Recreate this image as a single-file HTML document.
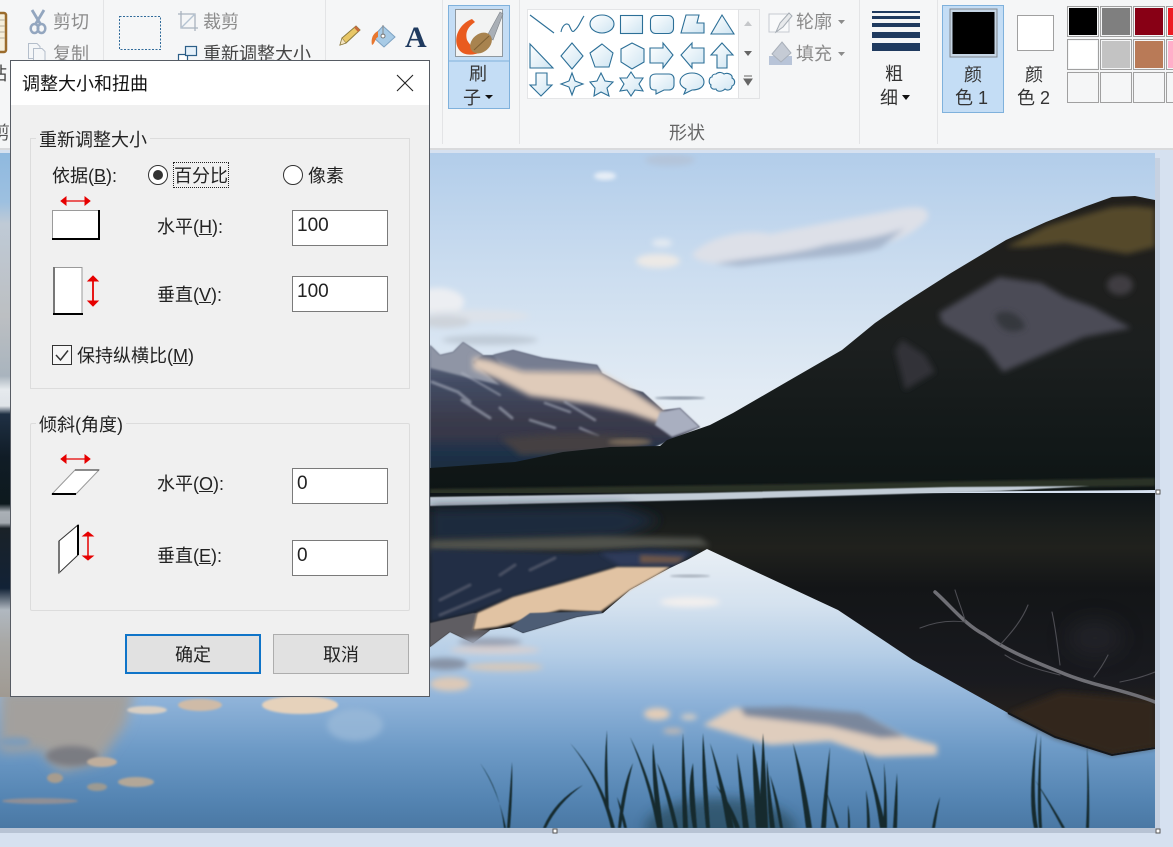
<!DOCTYPE html>
<html><head><meta charset="utf-8"><style>
html,body{margin:0;padding:0;width:1173px;height:847px;overflow:hidden;background:#d6e1f0}
body{position:relative;font-family:"Liberation Sans","Noto Sans CJK SC",sans-serif;font-size:18px;color:#222}
.t{position:absolute;line-height:24px;height:24px;white-space:nowrap;margin-top:1px}
.g{color:#8b8b8b}.c{text-align:center}
.b{position:absolute;box-sizing:border-box}
svg{position:absolute;left:0;top:0}
.in{position:absolute;box-sizing:border-box;left:292px;width:96px;height:36px;background:#fff;border:1px solid #7a7a7a;font-size:19px;line-height:29px;padding-left:4px;color:#222}
.sw{position:absolute;box-sizing:border-box;width:32px;height:31px;border:1px solid #a0a0a0}
.sw i{position:absolute;left:1px;top:1px;right:1px;bottom:1px;display:block}
</style></head><body>

<svg width="1173" height="847" viewBox="0 0 1173 847">
<defs>
<linearGradient id="sky" x1="0" y1="0" x2="0" y2="1"><stop offset="0" stop-color="#b2cdea"/><stop offset=".35" stop-color="#cadcef"/><stop offset=".75" stop-color="#e2ebf4"/><stop offset="1" stop-color="#eaf0f5"/></linearGradient>
<linearGradient id="refl" gradientUnits="userSpaceOnUse" x1="0" y1="549" x2="0" y2="828"><stop offset="0" stop-color="#e9eff5"/><stop offset=".2" stop-color="#d5e2ef"/><stop offset=".38" stop-color="#b4cde6"/><stop offset=".54" stop-color="#8fb3d9"/><stop offset=".72" stop-color="#6d9ac6"/><stop offset=".9" stop-color="#5484b2"/><stop offset="1" stop-color="#4a78a4"/></linearGradient>
<linearGradient id="mt" gradientUnits="userSpaceOnUse" x1="0" y1="200" x2="0" y2="490"><stop offset="0" stop-color="#211f1c"/><stop offset=".5" stop-color="#1c1f1f"/><stop offset=".8" stop-color="#131919"/><stop offset="1" stop-color="#0e1515"/></linearGradient>
<linearGradient id="far" gradientUnits="userSpaceOnUse" x1="0" y1="345" x2="0" y2="470"><stop offset="0" stop-color="#6a7288"/><stop offset=".3" stop-color="#434c64"/><stop offset=".6" stop-color="#3a3b4c"/><stop offset=".72" stop-color="#37384a"/><stop offset=".85" stop-color="#1f3148"/><stop offset="1" stop-color="#1b2c40"/></linearGradient>
<linearGradient id="rw" gradientUnits="userSpaceOnUse" x1="0" y1="495" x2="0" y2="760"><stop offset="0" stop-color="#0f1518"/><stop offset=".12" stop-color="#1b1e1c"/><stop offset=".2" stop-color="#20211d"/><stop offset=".35" stop-color="#131517"/><stop offset=".7" stop-color="#191a1f"/><stop offset="1" stop-color="#32271a"/></linearGradient>
<linearGradient id="strip" x1="0" y1="0" x2="0" y2="1">
<stop offset="0" stop-color="#8fb9df"/><stop offset=".09" stop-color="#9dc0e0"/><stop offset=".13" stop-color="#bfcad6"/><stop offset=".3" stop-color="#bcbfc2"/><stop offset=".41" stop-color="#a9b4be"/><stop offset=".435" stop-color="#e6eaee"/><stop offset=".465" stop-color="#dfe3e8"/><stop offset=".48" stop-color="#1f3044"/><stop offset=".56" stop-color="#101c26"/><stop offset=".645" stop-color="#0e1a1e"/><stop offset=".66" stop-color="#aab0b6"/><stop offset=".68" stop-color="#a3a9af"/><stop offset=".69" stop-color="#1a2228"/><stop offset=".8" stop-color="#122236"/><stop offset=".84" stop-color="#b0b8c0"/><stop offset=".9" stop-color="#a8a8a6"/><stop offset="1" stop-color="#a09a92"/></linearGradient>
<linearGradient id="sf" x1="0" y1="0" x2="1" y2="1"><stop offset="0" stop-color="#fff"/><stop offset="1" stop-color="#cfe5f2"/></linearGradient>
<filter id="b1" x="-30%" y="-30%" width="160%" height="160%"><feGaussianBlur stdDeviation="1"/></filter>
<filter id="b2" x="-30%" y="-30%" width="160%" height="160%"><feGaussianBlur stdDeviation="2"/></filter>
<filter id="b3" x="-30%" y="-50%" width="160%" height="200%"><feGaussianBlur stdDeviation="3"/></filter>
<filter id="b6" x="-40%" y="-60%" width="180%" height="220%"><feGaussianBlur stdDeviation="6"/></filter>
<filter id="b10" x="-40%" y="-60%" width="180%" height="220%"><feGaussianBlur stdDeviation="10"/></filter>
<filter id="bg" x="-5%" y="-5%" width="110%" height="110%"><feGaussianBlur stdDeviation=".5"/></filter>
<clipPath id="ph"><rect x="0" y="153" width="1155" height="675"/></clipPath>
</defs>

<!-- canvas shadow -->
<rect x="0" y="828" width="1160" height="5" fill="#b7c3d4"/>
<rect x="1155" y="158" width="5" height="675" fill="#c6d1e1"/>

<g clip-path="url(#ph)">
<rect x="0" y="153" width="1155" height="320" fill="url(#sky)"/>
<!-- sky clouds -->
<ellipse cx="670" cy="160" rx="25" ry="6" fill="#b4c5da" filter="url(#b3)"/>
<ellipse cx="605" cy="176" rx="11" ry="4" fill="#e8eff7" filter="url(#b2)"/>
<g filter="url(#b3)">
<path d="M692 255 C705 238 745 228 770 234 C800 228 850 218 885 212 C915 205 930 205 928 218 C915 235 890 245 850 250 C810 258 770 262 740 262 C720 264 700 265 692 255Z" fill="#dde0e8"/>
<path d="M715 264 C740 258 790 256 825 245 C860 240 885 236 905 228 L880 248 C850 256 830 256 790 260 L740 266Z" fill="#a8b7cd"/>
<ellipse cx="658" cy="261" rx="22" ry="7" fill="#ece9e6"/>
<ellipse cx="662" cy="243" rx="10" ry="4" fill="#e4eaf1"/>
</g>
<g filter="url(#b3)">
<ellipse cx="438" cy="302" rx="26" ry="14" fill="#eceef2"/>
<ellipse cx="470" cy="316" rx="60" ry="6" fill="#dde2e9"/>
<ellipse cx="490" cy="340" rx="48" ry="5" fill="#c0cbd7"/>
<ellipse cx="445" cy="322" rx="25" ry="6" fill="#cdd3da"/>
</g>
<ellipse cx="680" cy="398" rx="25" ry="1.500" fill="#8b96a5" filter="url(#b1)"/>
<!-- far mountain -->
<path d="M430 345 L440 355 L453 352 L463 342 L483 355 L493 355 L513 350 L543 358 L597 365 L602 373 L630 388 L643 392 L663 410 L680 408 L700 427 L657 446 L600 470 L430 475Z" fill="url(#far)" filter="url(#bg)"/>
<path d="M430 345 L440 355 L453 352 L463 342 L483 355 L473 362 L500 385 L470 378 L430 368Z" fill="#8f95a5" filter="url(#b1)"/>
<path d="M493 355 L513 350 L543 358 L597 365 L602 373 L523 373 L500 364Z" fill="#767d91" filter="url(#b1)"/>
<path d="M473 357 L490 360 L523 371 L600 372 L630 389 L663 411 L668 426 L630 413 L590 404 L530 396 L497 379 L473 369Z" fill="#dfcbba" filter="url(#b3)"/>
<path d="M660 412 L680 408 L700 427 L672 437 L655 425Z" fill="#a9afc0" filter="url(#b1)"/>
<g stroke="#aeb4c2" fill="none" filter="url(#b1)" stroke-linecap="round" opacity=".6">
<path d="M432 382 L458 392 L470 402 M462 400 L490 418 M500 408 L512 418" stroke-width="3"/>
<path d="M530 420 L555 428 M580 428 L598 436 M545 403 L570 412 M565 402 L595 420" stroke-width="2.500"/>
<path d="M462 373 L500 395" stroke-width="2"/>
</g>
<path d="M500 438 Q580 430 650 438 L630 452 L520 455Z" fill="#443f42" filter="url(#b3)"/>
<ellipse cx="630" cy="442" rx="22" ry="3" fill="#7a6c5c" filter="url(#b2)"/>
<!-- big mountain -->
<path d="M660 446 L667 440 L710 425 L733 413 L790 380 L842 350 L875 323 L904 303 L951 273 L1006 240 L1046 222 L1084 207 L1112 197 L1135 196 L1155 200 L1155 490 L430 496 L430 468 L515 462 L563 452 L610 447Z" fill="url(#mt)"/>
<clipPath id="mc"><path d="M1006 240 L1046 222 L1084 207 L1112 197 L1135 196 L1155 200 L1155 262 L1000 262Z"/></clipPath>
<g clip-path="url(#mc)"><path d="M1006 247 L1046 226 L1084 215 L1112 207 L1135 206 L1155 208 L1155 247 L1127 254 L1065 243 L1027 247Z" fill="#54482a" filter="url(#b3)"/></g>
<path d="M939 313 L999 277 L1041 283 L1065 297 L1093 307 L1131 328 L1084 337 L1003 372 L984 347 L942 323Z" fill="#4c4c56" filter="url(#b3)"/>
<path d="M995 315 C1010 305 1025 320 1025 328 C1012 336 998 330 995 315Z" fill="#36373c" filter="url(#b3)"/>
<path d="M895 350 L902 340 L925 355 L935 372 L905 390Z" fill="#323338" filter="url(#b3)"/>
<ellipse cx="1120" cy="285" rx="13" ry="10" fill="#3f3e42" filter="url(#b3)"/>
<path d="M430 489 L800 484 L1155 478 L1155 486 L800 491 L430 496Z" fill="#2a3027" filter="url(#b1)"/>
<!-- water -->
<rect x="0" y="493" width="1155" height="335" fill="url(#rw)"/>
<path d="M430 497 L700 493 L950 487 L1090 486 L1000 491 L700 500 L430 506Z" fill="#c2ccd6" filter="url(#bg)"/>
<!-- left reflected mountain -->
<path d="M430 508 L620 506 L660 520 L620 538 L430 545Z" fill="#1b2b3e" filter="url(#b6)"/>
<path d="M430 540 L600 536 L700 538 L710 546 L600 550 L430 552Z" fill="#50514c" filter="url(#b3)"/>
<path d="M430 549 L580 553 L650 548 L700 552 L670 568 L617 567 L563 583 L513 597 L473 613 L430 623Z" fill="#232e44" filter="url(#b2)"/>
<path d="M600 553 L690 552 L675 565 L620 566Z" fill="#2d3a5a" filter="url(#b2)"/>
<path d="M640 555 L685 557 L678 563 L640 563Z" fill="#6e5648" filter="url(#b2)"/>
<g stroke="#5d6272" fill="none" filter="url(#b1)" stroke-linecap="round" stroke-width="3" opacity=".7"><path d="M440 600 L470 585 M500 575 L515 565 M530 570 L555 558 M440 615 L500 590"/></g>
<!-- reflected sky -->
<path d="M0 647 L430 647 L450 632 L473 643 L490 630 L510 627 L523 633 L577 617 L603 613 L630 590 L657 575 L670 568 L687 560 L707 549 L838 610 L913 660 L1008 713 L1055 737 L1112 754 L1155 747 L1155 828 L0 828Z" fill="url(#refl)"/>
<ellipse cx="690" cy="602" rx="30" ry="5" fill="#f2efee" filter="url(#b3)"/>
<ellipse cx="690" cy="576" rx="20" ry="1.500" fill="#aab3be" filter="url(#b1)"/>
<!-- peach band and neighbours -->
<path d="M430 623 L473 613 L477 613 L473 630 L490 630 L473 643 L450 632 L430 647Z" fill="#5f5d62" filter="url(#bg)"/>
<path d="M473 630 L477 613 L513 597 L563 583 L617 567 L670 567 L657 575 L630 590 L607 607 L600 612 L560 610 L523 620 L497 627Z" fill="#e1c3a3" filter="url(#b1)"/>
<path d="M510 627 L530 613 L600 611 L603 613 L577 617 L523 633Z" fill="#4e5d74" filter="url(#bg)"/>
<g filter="url(#b3)">
<ellipse cx="490" cy="642" rx="32" ry="4" fill="#98a1b3"/>
<ellipse cx="495" cy="650" rx="45" ry="4" fill="#d6cfd0"/>
<ellipse cx="505" cy="667" rx="38" ry="4" fill="#d6c8ba"/>
<ellipse cx="445" cy="664" rx="22" ry="6" fill="#8793a6"/>
<ellipse cx="450" cy="684" rx="20" ry="7" fill="#dcc9b8"/>
</g>
<!-- reflection cloud -->
<g filter="url(#b3)">
<ellipse cx="657" cy="714" rx="13" ry="6" fill="#e3cdb8"/>
<ellipse cx="689" cy="717" rx="8" ry="3" fill="#d4cdc4"/>
<ellipse cx="673" cy="731" rx="10" ry="3" fill="#c0b8b4"/>
<path d="M703 725 L733 708 L800 708 L860 713 L907 737 L937 745 L937 755 L877 757 L830 741 L770 745Z" fill="#dfcdbd"/>
<path d="M740 708 L790 707 L860 713 L905 737 L880 738 L830 726 L780 720 L745 716Z" fill="#7a879c"/>
</g>
<!-- bottom-left clouds -->
<g filter="url(#b6)">
<path d="M0 690 L135 690 L125 725 L100 762 L60 772 L40 750 L0 752Z" fill="#a3a09d"/>
</g>
<g filter="url(#b3)">
<ellipse cx="15" cy="742" rx="16" ry="5" fill="#7e9cba"/>
<ellipse cx="72" cy="756" rx="26" ry="10" fill="#7a7b82"/>
<ellipse cx="355" cy="725" rx="28" ry="16" fill="#9dbad9" opacity=".7"/>
</g>
<g filter="url(#b1)">
<ellipse cx="300" cy="705" rx="38" ry="9" fill="#e6d2bb"/>
<ellipse cx="200" cy="705" rx="22" ry="6" fill="#cfbba7"/>
<ellipse cx="147" cy="710" rx="20" ry="4" fill="#d9cfc3"/>
<ellipse cx="102" cy="762" rx="15" ry="5" fill="#c0ae9c"/>
<ellipse cx="136" cy="782" rx="18" ry="5" fill="#b3a798"/>
<ellipse cx="97" cy="787" rx="10" ry="4" fill="#9c9a92"/>
<ellipse cx="55" cy="778" rx="8" ry="5" fill="#a79c8e"/>
<ellipse cx="40" cy="801" rx="38" ry="3" fill="#8f8f96"/>
</g>
<!-- reflected big mountain tint -->
<path d="M1008 713 L1055 737 L1112 754 L1155 747 L1155 700 L1060 692Z" fill="#33281b" filter="url(#b3)"/>
<ellipse cx="1095" cy="638" rx="28" ry="18" fill="#2a2b31" opacity=".55" filter="url(#b10)"/>
<path d="M1008 713 L1055 737 L1112 755 L1155 748" fill="none" stroke="#14161a" stroke-width="2"/>
<!-- branch -->
<g fill="none" stroke-linecap="round">
<path d="M935 592 C950 605 965 625 985 635 C1005 650 1035 662 1060 672 C1090 685 1125 690 1155 702" stroke-width="3.500" stroke="#6f6f75"/>
<path d="M955 590 C958 600 962 610 965 620M920 628 C935 622 950 620 965 622M1028 605 C1022 620 1012 632 1000 645M1052 612 C1056 630 1058 650 1060 665M1108 655 C1103 665 1098 672 1094 677M1155 672 C1140 678 1130 680 1120 682M1005 655 C1020 665 1040 670 1060 675" stroke-width="1.100" stroke="#4d4d53"/>
</g>
<!-- grass -->
<ellipse cx="720" cy="828" rx="75" ry="30" fill="#1d3a44" opacity=".55" filter="url(#b6)"/>
<g fill="#13292e" filter="url(#bg)">
<path d="M504 828 Q500 790 480 763 Q498 790 506 828Z"/>
<path d="M507 828 Q510 790 512 762 Q513 790 510 828Z"/>
<path d="M543 828 Q555 800 583 785 Q558 803 546 828Z"/>
<path d="M611 828 Q600 780 570 743 Q603 780 615 828Z"/>
<path d="M606 810 Q603 770 607 730 Q607 770 609 812Z"/>
<path d="M618 828 Q622 785 633 763 Q626 790 621 828Z"/>
<path d="M624 828 Q620 810 617 797 Q623 810 627 828Z"/>
<path d="M657 828 Q648 780 630 737 Q652 780 660 828Z"/>
<path d="M658 828 Q651 780 653 743 Q657 780 663 828Z"/>
<path d="M674 828 Q665 790 657 763 Q670 790 678 828Z"/>
<path d="M683 828 Q681 770 683 733 Q685 770 688 828Z"/>
<path d="M693 828 Q686 790 693 763 Q694 790 697 828Z"/>
<path d="M706 828 Q701 780 703 733 Q707 780 710 828Z"/>
<path d="M727 828 Q719 780 710 743 Q723 780 734 828Z"/>
<path d="M743 828 Q739 790 737 753 Q744 790 749 828Z"/>
<path d="M756 828 Q752 770 753 743 Q759 770 763 828Z"/>
<path d="M759 828 Q761 770 763 733 Q766 770 768 828Z"/>
<path d="M770 828 Q766 790 767 760 Q770 790 775 828Z"/>
<path d="M735 828 Q728 805 716 785 Q732 805 740 828Z"/>
<path d="M780 828 Q775 800 770 775 Q779 800 783 828Z"/>
<path d="M806 828 Q800 780 793 743 Q805 780 812 828Z"/>
<path d="M821 828 Q824 790 830 747 Q828 790 826 828Z"/>
<path d="M836 828 Q831 810 826 790 Q833 810 839 828Z"/>
<path d="M848 828 Q848 815 848 805 Q850 815 850 828Z"/>
<path d="M880 828 Q875 790 863 750 Q878 790 886 828Z"/>
<path d="M883 828 Q885 790 884 763 Q887 790 887 828Z"/>
<path d="M893 828 Q895 795 897 773 Q898 800 897 828Z"/>
<path d="M866 790 Q870 810 870 828 L867 828 Q867 810 866 790Z"/>
<path d="M932 828 Q935 810 940 797 Q937 815 935 828Z"/>
<path d="M1034 828 Q1027 795 1037 732 Q1032 795 1038 828Z"/>
<path d="M1039 828 Q1036 795 1041 735 Q1040 795 1042 828Z"/>
<path d="M1062 828 Q1050 805 1035 780 Q1052 805 1065 828Z"/>
<path d="M1086 828 Q1088 790 1087 745 Q1090 790 1089 828Z"/>
</g>
<!-- left visible strip -->
<rect x="0" y="153" width="11" height="544" fill="url(#strip)"/>
</g>

<!-- handles -->
<rect x="553" y="829" width="4" height="4" fill="#fff" stroke="#555" stroke-width="1"/>
<rect x="1156" y="829" width="4" height="4" fill="#fff" stroke="#555" stroke-width="1"/>
<rect x="1156" y="490" width="4" height="4" fill="#fff" stroke="#555" stroke-width="1"/>

<!-- ribbon -->
<rect x="0" y="0" width="1173" height="148" fill="#f5f6f7"/>
<rect x="0" y="148" width="1173" height="2" fill="#d9dadc"/>
<g fill="#e3e4e6"><rect x="103" y="0" width="1" height="144"/><rect x="325" y="0" width="1" height="144"/><rect x="442" y="0" width="1" height="144"/><rect x="519" y="0" width="1" height="144"/><rect x="859" y="0" width="1" height="144"/><rect x="937" y="0" width="1" height="144"/></g>

<!-- paste icon -->
<rect x="-10" y="13" width="16" height="39" rx="2" fill="#f5efdc" stroke="#9b6c2c" stroke-width="2.500"/>
<g stroke="#b5ad9a"><path d="M0 20H5M0 26H5M0 32H5M0 38H5"/></g>
<!-- scissors -->
<g fill="none" stroke="#93a6bf"><path d="M32 10 L41 25M44 10 L35 25" stroke-width="2.800"/><ellipse cx="34.500" cy="28.500" rx="3.800" ry="4.500" stroke-width="2.500"/><ellipse cx="41.500" cy="28.500" rx="3.800" ry="4.500" stroke-width="2.500"/></g>
<!-- copy -->
<g fill="#f4f6f8" stroke="#b4becb"><path d="M28.500 43.500H37L40 46.500V58.500H28.500Z"/><path d="M33.500 48.500H42L45 51.500V62.500H33.500Z"/></g>
<!-- select -->
<rect x="119.500" y="16.500" width="41" height="33" fill="none" stroke="#2f6a9a" stroke-dasharray="2 1.500"/>
<!-- crop -->
<g fill="none" stroke="#a9b3bf" stroke-width="1.300"><path d="M178 14H195V31M181 11V28H198"/><path d="M181 28L195 14" stroke="#b5c3d2"/></g>
<!-- resize -->
<g fill="none" stroke="#2c5f88" stroke-width="1.200"><rect x="178.500" y="54.500" width="9" height="9" fill="#fff"/><rect x="185.500" y="46.500" width="11" height="9" fill="#e6f1fa"/></g>
<!-- pencil -->
<path d="M340 45 L342 38 L356 26 L360 30 L346 43Z" fill="#e8c767" stroke="#8a7a3f"/>
<path d="M340 45L342 38L346 43Z" fill="#f4e3c0" stroke="#8a7a3f" stroke-width=".6"/>
<path d="M354 27.500L356 26L360 30L358 32Z" fill="#c96a3d"/>
<!-- fill bucket -->
<path d="M383 26 L395 37 L384 47 L373 37Z" fill="#a8cbe6" stroke="#7da2c2"/>
<path d="M378 31 C372 34 371 40 372 45 C375 44 375 38 378 37Z" fill="#e8772f"/>
<circle cx="383" cy="36" r="2" fill="#fff" stroke="#777"/><path d="M383 25V35" stroke="#888" fill="none"/>
<!-- brush button -->
<rect x="448.500" y="5.500" width="61" height="103" fill="#c4ddf5" stroke="#7fb1dc"/>
<path d="M449 61H509" stroke="#7fb1dc"/>
<rect x="455.500" y="9.500" width="47" height="47" fill="#f2f3f3" stroke="#8f989f"/>
<path d="M472 19 C459 24 453 38 458 48 C462 56 472 56 482 52 C476 50 470 46 467 40 C465 32 468 27 475 22Z" fill="#e95b1f"/>
<path d="M487 36 L500 12 L503 14 L493 40Z" fill="#a9afb6" stroke="#7d8389" stroke-width=".6"/>
<ellipse cx="481" cy="43" rx="12" ry="9" transform="rotate(-40 481 43)" fill="#a8834f"/>
<path d="M474 50 L489 36" stroke="#7d5f33"/>
<path d="M485 95H493L489 99Z" fill="#111"/>

<!-- shapes gallery -->
<rect x="527.500" y="9.500" width="211" height="89" fill="#fff" stroke="#e4e5e7"/>
<rect x="738.500" y="9.500" width="21" height="89" fill="#f5f6f7" stroke="#e1e2e4"/>
<path d="M744 26L752 26L748 21Z" fill="#c5c7ca"/><path d="M744 51L752 51L748 56Z" fill="#666"/><path d="M744 76H752M744 79H752L748 85Z" fill="#666" stroke="#666"/>
<g fill="url(#sf)" stroke="#2c6f97" stroke-width="1.100">
<path d="M530 15L554 33" fill="none"/>
<path d="M561 32C562 26 566 22 569 25C571 29 572 34 575 30C579 27 581 20 584 16" fill="none"/>
<ellipse cx="602" cy="24" rx="12" ry="9"/>
<rect x="620.500" y="15.500" width="22" height="18"/>
<rect x="650.500" y="15.500" width="23" height="18" rx="5"/>
<path d="M686 15H699L697 23H704V33H681Z"/>
<path d="M722 15L734 34H711Z"/>
<path d="M530 44V68H553Z"/>
<path d="M572 43L583 56L572 69L561 56Z"/>
<path d="M602 44L613 53L609 67H595L590 53Z"/>
<path d="M632 43L644 49V62L632 69L621 62V49Z"/>
<path d="M650 48H663V43L673 55L663 68V63H650Z"/>
<path d="M704 48H692V43L681 55L692 68V63H704Z"/>
<path d="M722 43L733 55H727V68H717V55H711Z"/>
<path d="M536 73H547V85H552L541 96L530 85H536Z"/>
<path d="M572 73L575 81L583 84L575 87L572 95L569 87L561 84L569 81Z"/>
<path d="M601 73L605 81L613 82L607 88L609 96L601 92L594 96L595 88L590 82L597 81Z"/>
<path d="M631 72L635 78L643 78L639 84L643 91L635 90L631 96L627 90L620 91L624 84L620 78L627 78Z"/>
<path d="M656 74H669C672 74 674 76 674 79V85C674 88 672 90 669 90H664L656 94V90H654C651 90 650 88 650 85V79C650 76 652 74 656 74Z"/>
<path d="M692 73C699 73 704 77 704 82C704 87 699 90 692 90L684 94L686 89C682 87 680 85 680 82C680 77 685 73 692 73Z"/>
<path d="M716 74C719 71 723 73 724 74C728 72 733 75 732 78C736 80 735 85 732 86C732 90 727 91 725 89C722 92 717 92 716 89C712 90 710 87 711 85C708 83 709 77 712 77C712 75 714 74 716 74Z"/>
</g>
<!-- outline/fill icons -->
<rect x="769" y="14" width="20" height="18" fill="#f8f9fa" stroke="#c6cbd1"/>
<path d="M776 32L780 23L789 13L792 16L783 27Z" fill="#e8eaec" stroke="#a5acb4"/>
<rect x="769" y="56" width="23" height="9" fill="#b8c4d8"/>
<path d="M782 42L791 53L781 62L772 54Z" fill="#c5cbd5" stroke="#a9b0ba"/>
<path d="M838 20H845L841.500 24Z" fill="#8b8b8b"/><path d="M838 52H845L841.500 56Z" fill="#8b8b8b"/>
<!-- size -->
<g fill="#1f3a5f"><rect x="872" y="11" width="48" height="2"/><rect x="872" y="16" width="48" height="3"/><rect x="872" y="23" width="48" height="4"/><rect x="872" y="32" width="48" height="6"/><rect x="872" y="43" width="48" height="8"/></g>
<path d="M902 95H910L906 100Z" fill="#111"/>
<!-- color1 -->
<rect x="942.500" y="5.500" width="61" height="107" fill="#c4ddf5" stroke="#7fb1dc"/>
<rect x="950" y="9" width="47" height="48" fill="#c5d5e5" stroke="#808890"/>
<rect x="952.500" y="12" width="42" height="42" fill="#000"/>
<rect x="1017.500" y="15.500" width="36" height="35" fill="#fff" stroke="#a0a0a0"/>
</svg>

<!-- ribbon text -->
<div class="t" style="left:-11px;top:61px;color:#444">粘</div>
<div class="t" style="left:-8px;top:120px;color:#555">剪贴板</div>
<div class="t g" style="left:53px;top:9px">剪切</div>
<div class="t g" style="left:53px;top:41px">复制</div>
<div class="t g" style="left:203px;top:9px">裁剪</div>
<div class="t" style="left:203px;top:41px;color:#444">重新调整大小</div>
<div class="t" style="left:405px;top:21px;font-family:'Liberation Serif',serif;font-weight:bold;font-size:30px;line-height:31px;height:31px;color:#1f3a5f">A</div>
<div class="t" style="left:469px;top:61px;color:#333">刷</div>
<div class="t" style="left:463px;top:85px;color:#333">子</div>
<div class="t g" style="left:796px;top:9px">轮廓</div>
<div class="t g" style="left:796px;top:41px">填充</div>
<div class="t" style="left:669px;top:120px;color:#666">形状</div>
<div class="t" style="left:885px;top:61px;color:#333">粗</div>
<div class="t" style="left:880px;top:85px;color:#333">细</div>
<div class="t" style="left:964px;top:62px;color:#333">颜</div>
<div class="t" style="left:955px;top:85px;color:#333">色 1</div>
<div class="t" style="left:1025px;top:62px;color:#333">颜</div>
<div class="t" style="left:1017px;top:85px;color:#333">色 2</div>

<!-- palette -->
<div class="sw" style="left:1067px;top:6px"><i style="background:#000"></i></div>
<div class="sw" style="left:1100px;top:6px"><i style="background:#7f7f7f"></i></div>
<div class="sw" style="left:1133px;top:6px"><i style="background:#880015"></i></div>
<div class="sw" style="left:1166px;top:6px"><i style="background:#ed1c24"></i></div>
<div class="sw" style="left:1067px;top:39px"><i style="background:#fff"></i></div>
<div class="sw" style="left:1100px;top:39px"><i style="background:#c3c3c3"></i></div>
<div class="sw" style="left:1133px;top:39px"><i style="background:#b97a57"></i></div>
<div class="sw" style="left:1166px;top:39px"><i style="background:#ffaec9"></i></div>
<div class="sw" style="left:1067px;top:72px"></div>
<div class="sw" style="left:1100px;top:72px"></div>
<div class="sw" style="left:1133px;top:72px"></div>
<div class="sw" style="left:1166px;top:72px"></div>

<!-- dialog -->
<div class="b" style="left:10px;top:60px;width:420px;height:637px;background:#f0f0f0;border:1px solid #565b63"></div>
<div class="b" style="left:11px;top:61px;width:418px;height:44px;background:#fff"></div>
<div class="t" style="left:22px;top:71px;color:#111">调整大小和扭曲</div>
<svg width="1173" height="847" viewBox="0 0 1173 847">
<path d="M397 75L413 91M413 75L397 91" stroke="#222" stroke-width="1.100" fill="none"/>
</svg>

<div class="b" style="left:30px;top:138px;width:380px;height:251px;border:1px solid #dcdcdc"></div>
<div class="t" style="left:36px;top:127px;padding:0 3px;background:#f0f0f0">重新调整大小</div>
<div class="b" style="left:30px;top:423px;width:380px;height:188px;border:1px solid #dcdcdc;border-radius:2px"></div>
<div class="t" style="left:36px;top:412px;padding:0 3px;background:#f0f0f0">倾斜(角度)</div>

<div class="t" style="left:52px;top:163px">依据(<u>B</u>):</div>
<div class="b" style="left:148px;top:165px;width:20px;height:20px;border-radius:50%;background:#fff;border:1px solid #333"></div>
<div class="b" style="left:153px;top:170px;width:10px;height:10px;border-radius:50%;background:#333"></div>
<div class="b" style="left:173px;top:162px;width:56px;height:26px;border:1px dotted #222"></div>
<div class="t" style="left:174px;top:163px">百分比</div>
<div class="b" style="left:283px;top:165px;width:20px;height:20px;border-radius:50%;background:#fff;border:1px solid #333"></div>
<div class="t" style="left:308px;top:163px">像素</div>

<div class="t" style="left:157px;top:214px">水平(<u>H</u>):</div>
<div class="in" style="top:210px">100</div>
<div class="t" style="left:157px;top:282px">垂直(<u>V</u>):</div>
<div class="in" style="top:276px">100</div>

<div class="b" style="left:52px;top:345px;width:20px;height:20px;border:1px solid #333;background:#f6f6f6"></div>
<svg width="1173" height="847" viewBox="0 0 1173 847"><path d="M56 355L60.500 360L68 350.500" fill="none" stroke="#333" stroke-width="1.500"/></svg>
<div class="t" style="left:77px;top:343px">保持纵横比(<u>M</u>)</div>

<div class="t" style="left:157px;top:471px">水平(<u>O</u>):</div>
<div class="in" style="top:468px">0</div>
<div class="t" style="left:157px;top:543px">垂直(<u>E</u>):</div>
<div class="in" style="top:540px">0</div>

<svg width="1173" height="847" viewBox="0 0 1173 847">
<!-- icon 1 -->
<rect x="52.500" y="210.500" width="46" height="28" fill="#fff" stroke="#9a9a9a"/>
<path d="M99 210V239H52" fill="none" stroke="#000" stroke-width="2"/>
<g fill="#e60000" stroke="#e60000"><path d="M63 201H88" fill="none" stroke-width="1.200"/><path d="M61 201L66 197V205Z"/><path d="M90 201L85 197V205Z"/></g>
<!-- icon 2 -->
<rect x="54" y="267.500" width="28" height="46" fill="#fff" stroke="#9a9a9a"/>
<path d="M54 267V315" stroke="#777" stroke-width="2" fill="none"/>
<path d="M53 314H83" stroke="#000" stroke-width="2" fill="none"/>
<g fill="#e60000" stroke="#e60000"><path d="M93 278V304" fill="none" stroke-width="1.800"/><path d="M93 276L88 281H98Z"/><path d="M93 306L88 301H98Z"/></g>
<!-- icon 3 -->
<path d="M75 470H99L76 494H52Z" fill="#fff" stroke="#999"/>
<path d="M75 470H99" stroke="#666" stroke-width="1.500" fill="none"/>
<path d="M52 494H76" stroke="#000" stroke-width="2" fill="none"/>
<g fill="#e60000" stroke="#e60000"><path d="M63 459H88" fill="none" stroke-width="1.200"/><path d="M61 459L66 455V463Z"/><path d="M90 459L85 455V463Z"/></g>
<!-- icon 4 -->
<path d="M59 541L78 525V555L59 573Z" fill="#fff" stroke="#333"/>
<path d="M59 541V573" stroke="#777" stroke-width="2" fill="none"/>
<path d="M78 525V555" stroke="#000" stroke-width="2" fill="none"/>
<g fill="#e60000" stroke="#e60000"><path d="M88 534V558" fill="none" stroke-width="1.500"/><path d="M88 532L83 536H93Z"/><path d="M88 560L83 556H93Z"/></g>
</svg>

<div class="b c" style="left:125px;top:634px;width:136px;height:40px;background:#e1e1e1;border:2px solid #0f74c8;line-height:39px">确定</div>
<div class="b c" style="left:273px;top:634px;width:136px;height:40px;background:#e1e1e1;border:1px solid #adadad;line-height:41px">取消</div>
</body></html>
